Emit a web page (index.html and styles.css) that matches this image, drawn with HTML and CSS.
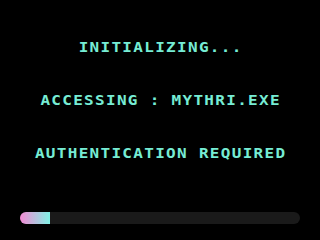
FILE: index.html
```html
<!DOCTYPE html>
<html>
<head>
<meta charset="utf-8">
<link rel="stylesheet" href="styles.css">
</head>
<body>
<div class="screen">
  <div class="lines">
    <div class="line">INITIALIZING...</div>
    <div class="line">ACCESSING : MYTHRI.EXE</div>
    <div class="line">AUTHENTICATION REQUIRED</div>
  </div>
  <div class="bar"><div class="fill" style="width:30px"></div></div>
</div>
</body>
</html>
```
FILE: styles.css
```css
html, body {
  margin: 0;
  padding: 0;
  background: #000;
}
.screen {
  width: 320px;
  height: 240px;
  display: flex;
  flex-direction: column;
  align-items: center;
  padding-top: 38px;
  box-sizing: border-box;
}
.lines {
  display: flex;
  flex-direction: column;
  align-items: center;
  gap: 33px;
}
.line {
  font-family: "DejaVu Sans Mono", monospace;
  font-weight: bold;
  font-size: 16px;
  line-height: 20px;
  letter-spacing: 1.3px;
  padding-left: 1.3px;
  color: #76ecd4;
  white-space: nowrap;
  transform: scaleY(0.86);
}
.bar {
  margin-top: 48px;
  width: 280px;
  height: 12px;
  border-radius: 6px;
  background: #1a1a1a;
  overflow: hidden;
}
.fill {
  height: 100%;
  background: linear-gradient(90deg, #f48ad4, #80f0e4);
}
```
